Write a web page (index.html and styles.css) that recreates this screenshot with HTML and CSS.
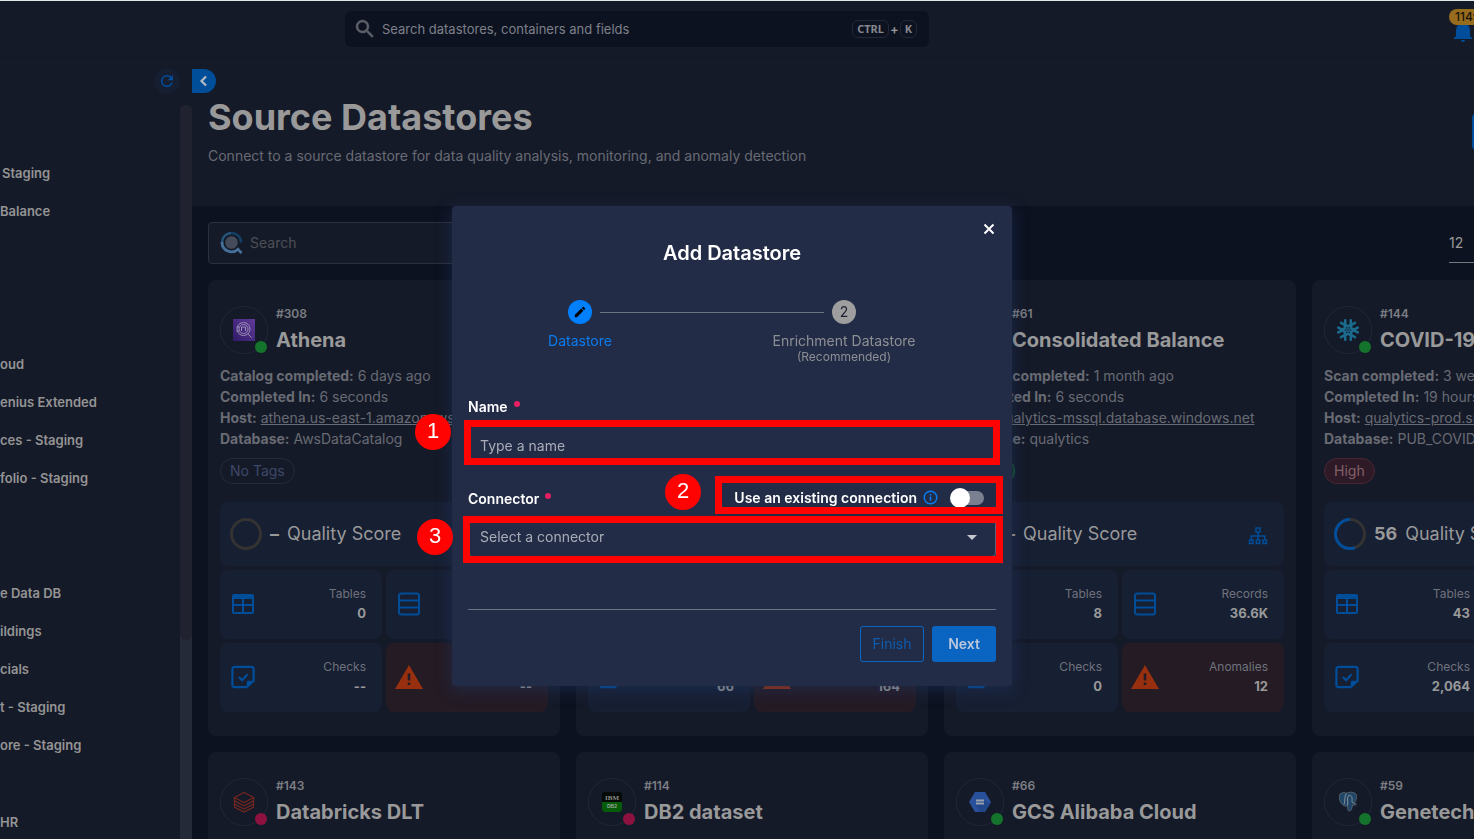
FILE: index.html
```html
<!DOCTYPE html>
<html lang="en">
<head>
<meta charset="utf-8">
<title>Source Datastores</title>
<link rel="stylesheet" href="styles.css">
</head>
<body>
<svg class="defs" aria-hidden="true">
  <symbol id="i-search" viewBox="0 0 24 24"><path fill="currentColor" stroke="currentColor" stroke-width=".5" d="M15.5 14h-.79l-.28-.27A6.47 6.47 0 0 0 16 9.5 6.5 6.5 0 1 0 9.5 16c1.61 0 3.09-.59 4.23-1.57l.27.28v.79l5 4.99L20.49 19l-4.99-5zm-6 0a4.5 4.5 0 1 1 0-9 4.5 4.5 0 0 1 0 9z"/></symbol>
  <symbol id="i-table" viewBox="0 0 24 24"><path fill="currentColor" fill-rule="evenodd" d="M3 2h18a2 2 0 0 1 2 2v16a2 2 0 0 1-2 2H3a2 2 0 0 1-2-2V4a2 2 0 0 1 2-2zm0 5v5h8V7zm10 0v5h8V7zM3 14v6h8v-6zm10 0v6h8v-6z"/></symbol>
  <symbol id="i-records" viewBox="0 0 24 24"><g fill="none" stroke="currentColor" stroke-width="2"><rect x="2" y="1.500" width="20" height="21" rx="2.500"/><path d="M2 8.500h20M2 15.500h20"/></g></symbol>
  <symbol id="i-check" viewBox="0 0 26 26"><path fill="none" stroke="currentColor" stroke-width="2.400" d="M17 24H4a2.500 2.500 0 0 1-2.500-2.500v-17A2.500 2.500 0 0 1 4 2h18a2.500 2.500 0 0 1 2.500 2.500V17z"/><path fill="currentColor" d="M17 24v-5a2 2 0 0 1 2-2h6z"/><path fill="none" stroke="currentColor" stroke-width="2.400" d="M8.500 13l3.500 3.500 6-6.500"/></symbol>
  <symbol id="i-warn" viewBox="0 0 28 24"><path fill="currentColor" fill-rule="evenodd" d="M14 0l14 24H0zM12.700 8.500v7h2.600v-7zm0 9v2.500h2.600v-2.500z"/></symbol>
  <symbol id="i-tree" viewBox="0 0 20 18"><g fill="none" stroke="currentColor" stroke-width="1.500"><rect x="8" y="1" width="4" height="4"/><rect x="1.500" y="13" width="3.500" height="3.500"/><rect x="8.300" y="13" width="3.500" height="3.500"/><rect x="15" y="13" width="3.500" height="3.500"/><path d="M10 5v8M3.300 13V9h13.400v4"/></g></symbol>
</svg>

<header class="topbar">
  <label class="global-search">
    <svg class="icon-24"><use href="#i-search"/></svg>
    <input type="text" placeholder="Search datastores, containers and fields" aria-label="Global search">
    <kbd>CTRL</kbd><span class="plus">+</span><kbd>K</kbd>
  </label>
  <button class="bell" aria-label="Notifications">
    <svg viewBox="0 0 24 24"><path fill="currentColor" d="M21 19v1H3v-1l2-2v-6a7 7 0 0 1 14 0v6zm-7 2a2 2 0 0 1-4 0z"/></svg>
    <span class="bell-count">1149</span>
  </button>
</header>

<div class="shell">
  <nav class="sidebar" aria-label="Datastores">
    <div class="sidebar-body">
      <button class="refresh" aria-label="Refresh"><svg viewBox="0 0 24 24"><path fill="currentColor" d="M17.650 6.350A8 8 0 1 0 19.730 14h-2.080A6 6 0 1 1 12 6c1.660 0 3.140.69 4.220 1.780L13 11h7V4z"/></svg></button>
      <ul class="tree tree-first"><li><a href="#">Staging</a></li><li><a href="#">Balance</a></li></ul>
      <ul class="tree tree-cloud"><li><a href="#">oud</a></li><li><a href="#">enius Extended</a></li><li><a href="#">ces - Staging</a></li><li><a href="#">folio - Staging</a></li></ul>
      <ul class="tree tree-data"><li><a href="#">e Data DB</a></li><li><a href="#">ildings</a></li><li><a href="#">cials</a></li><li><a href="#">t - Staging</a></li><li><a href="#">ore - Staging</a></li></ul>
      <ul class="tree tree-last"><li><a href="#">HR</a></li></ul>
    </div>
    <div class="scroll-track"><div class="scroll-thumb"></div></div>
  </nav>

  <main class="main">
    <button class="collapse" aria-label="Collapse sidebar"><svg viewBox="0 0 10 14"><path d="M7 2.500L2.500 7 7 11.500" fill="none" stroke="currentColor" stroke-width="2.200"/></svg></button>
    <section class="hero">
      <div>
        <h1>Source Datastores</h1>
        <p>Connect to a source datastore for data quality analysis, monitoring, and anomaly detection</p>
      </div>
      <button class="hero-add" aria-label="Add source datastore"></button>
    </section>

    <section class="content">
      <div class="toolbar">
        <label class="filter">
          <svg viewBox="0 0 24 24"><circle cx="11.500" cy="11.500" r="6.300" fill="#454b5a"/><path d="M21 11.500A9.500 9.500 0 0 0 8.500 2.500" fill="none" stroke="#123f63" stroke-width="2.600"/><path d="M11 2A9.500 9.500 0 0 0 2 11.500" fill="none" stroke="#235475" stroke-width="2.600"/><path d="M2 11a9.500 9.500 0 0 0 16 7.200l3.500 4" fill="none" stroke="#467099" stroke-width="2.800"/></svg>
          <input type="text" placeholder="Search" aria-label="Search datastores">
        </label>
        <select class="page-size" aria-label="Items per page"><option>12</option></select>
      </div>

      <div class="cards">
        <article class="card">
          <div class="card-head">
            <div class="avatar"><svg viewBox="0 0 22 22"><defs><linearGradient id="ath" x1="0" y1="1" x2="1" y2="0"><stop offset="0" stop-color="#2f1a66"/><stop offset="1" stop-color="#613a9b"/></linearGradient></defs><path fill="url(#ath)" d="M0 0h22v22H0z"/><g fill="none" stroke="#9a8fb4"><circle cx="10.500" cy="10" r="6.500"/><circle cx="10.500" cy="10" r="4.500"/><path d="M3.500 8h3M3.500 12h3M8.500 12V8h4v4M15 15l3.500 3.500"/></g></svg><i class="status ok"></i></div>
            <div><div class="card-id">#308</div><h2>Athena</h2></div>
          </div>
          <div class="details">
            <div><b>Catalog completed:</b> 6 days ago</div>
            <div><b>Completed In:</b> 6 seconds</div>
            <div><b>Host:</b> <a href="#">athena.us-east-1.amazonaws.com</a></div>
            <div><b>Database:</b> AwsDataCatalog</div>
          </div>
          <span class="chip">No Tags</span>
          <div class="tiles">
            <div class="score"><svg class="ring" viewBox="0 0 32 32"><circle cx="16" cy="16" r="14.500"/></svg><b>–</b><span>Quality Score</span></div>
            <div class="tile"><svg><use href="#i-table"/></svg><div><span>Tables</span><b>0</b></div></div>
            <div class="tile"><svg><use href="#i-records"/></svg><div><span>Records</span><b>--</b></div></div>
            <div class="tile"><svg><use href="#i-check"/></svg><div><span>Checks</span><b>--</b></div></div>
            <div class="tile alert"><svg><use href="#i-warn"/></svg><div><span>Anomalies</span><b>--</b></div></div>
          </div>
        </article>

        <article class="card">
          <div class="tiles tiles-end">
            <div class="tile"><svg><use href="#i-check"/></svg><div><span>Checks</span><b>66</b></div></div>
            <div class="tile alert"><svg><use href="#i-warn"/></svg><div><span>Anomalies</span><b>164</b></div></div>
          </div>
        </article>

        <article class="card">
          <div class="card-head">
            <div class="avatar"></div>
            <div><div class="card-id">#61</div><h2>Consolidated Balance</h2></div>
          </div>
          <div class="details">
            <div><b>Catalog completed:</b> 1 month ago</div>
            <div><b>Completed In:</b> 6 seconds</div>
            <div><b>Host:</b> <a href="#">qualytics-mssql.database.windows.net</a></div>
            <div><b>Database:</b> qualytics</div>
          </div>
          <span class="chip low">Low</span>
          <div class="tiles">
            <div class="score"><svg class="ring" viewBox="0 0 32 32"><circle cx="16" cy="16" r="14.500"/></svg><b>–</b><span>Quality Score</span><svg class="lineage"><use href="#i-tree"/></svg></div>
            <div class="tile"><svg><use href="#i-table"/></svg><div><span>Tables</span><b>8</b></div></div>
            <div class="tile"><svg><use href="#i-records"/></svg><div><span>Records</span><b>36.6K</b></div></div>
            <div class="tile"><svg><use href="#i-check"/></svg><div><span>Checks</span><b>0</b></div></div>
            <div class="tile alert"><svg><use href="#i-warn"/></svg><div><span>Anomalies</span><b>12</b></div></div>
          </div>
        </article>

        <article class="card">
          <div class="card-head">
            <div class="avatar"><svg viewBox="-12 -12 24 24"><g fill="none" stroke="#1a6b8d" stroke-width="2.800" stroke-linecap="round" stroke-linejoin="round"><circle r="1.500" stroke-width="1.300"/><g id="flake"><path d="M-3-10.500v4.700L0-3.800l3-2v-4.700" /></g><use href="#flake" transform="rotate(60)"/><use href="#flake" transform="rotate(120)"/><use href="#flake" transform="rotate(180)"/><use href="#flake" transform="rotate(240)"/><use href="#flake" transform="rotate(300)"/></g></svg><i class="status ok"></i></div>
            <div><div class="card-id">#144</div><h2>COVID-19</h2></div>
          </div>
          <div class="details">
            <div><b>Scan completed:</b> 3 weeks ago</div>
            <div><b>Completed In:</b> 19 hours</div>
            <div><b>Host:</b> <a href="#">qualytics-prod.snowflake</a></div>
            <div><b>Database:</b> PUB_COVID</div>
          </div>
          <span class="chip high">High</span>
          <div class="tiles">
            <div class="score"><svg class="ring" viewBox="0 0 32 32"><circle cx="16" cy="16" r="14.500"/><path d="M16 1.500A14.500 14.500 0 1 0 21 29.600"/></svg><b>56</b><span>Quality Score</span></div>
            <div class="tile"><svg><use href="#i-table"/></svg><div><span>Tables</span><b>43</b></div></div>
            <div class="tile"></div>
            <div class="tile"><svg><use href="#i-check"/></svg><div><span>Checks</span><b>2,064</b></div></div>
            <div class="tile alert"></div>
          </div>
        </article>

        <article class="card">
          <div class="card-head">
            <div class="avatar"><svg viewBox="0 0 22 22" fill="none" stroke="#70261f" stroke-width="1.300"><path d="M1.500 6.500L11 1.500l9.500 5L11 11.500zM1.500 6.500v3.300l9.500 5 9.500-5V7M1.500 10v3l9.500 5 9.500-5v-3M1.500 13.500v2.500l9.500 5 9.500-5v-2.500"/></svg><i class="status bad"></i></div>
            <div><div class="card-id">#143</div><h2>Databricks DLT</h2></div>
          </div>
        </article>
        <article class="card">
          <div class="card-head">
            <div class="avatar"><svg viewBox="0 0 22 22"><rect x="1" y="1" width="20" height="20" rx="3" fill="#060a06"/><path fill="#065c0b" d="M1 11h20v7a3 3 0 0 1-3 3H4a3 3 0 0 1-3-3z"/><text class="logo-ibm" x="11" y="9" text-anchor="middle">IBM</text><text class="logo-db" x="11" y="17" text-anchor="middle">DB2</text></svg><i class="status bad"></i></div>
            <div><div class="card-id">#114</div><h2>DB2 dataset</h2></div>
          </div>
        </article>
        <article class="card">
          <div class="card-head">
            <div class="avatar"><svg viewBox="0 0 22 22"><path fill="#28509b" d="M6 1h10l6 10-6 10H6L0 11z"/><path fill="#22468a" d="M15 9l6 4-5 8h-5l-4-7z"/><path fill="#98a0ad" d="M7 8.500h8v2H7zM7 11.500h8v2H7z"/></svg><i class="status ok"></i></div>
            <div><div class="card-id">#66</div><h2>GCS Alibaba Cloud</h2></div>
          </div>
        </article>
        <article class="card">
          <div class="card-head">
            <div class="avatar"><svg viewBox="0 0 22 22"><path d="M3 3c3-2 5-1.500 6.500-.8C12 1 16 .5 18.500 2.500c2 2 1 6-1 9.500.8 1 2 .5 2 1.200-1 1-2.500 1.300-4 .8-.5 2-.5 5-2.500 6-2 .3-2.500-1.500-2.700-5.500C9 15.500 7 15.500 6.500 14 4 14 1 7 3 3z" fill="#1f4668" stroke="#5f676f" stroke-width=".8"/><path d="M9.500 2.500C7 5 8.500 9 7 13.500M10.500 14.500c1-3-1-8 1-10 3-1 4 2 3.500 5 0 2 1 3 2.500 3" fill="none" stroke="#8b9096"/></svg><i class="status ok"></i></div>
            <div><div class="card-id">#59</div><h2>Genetech</h2></div>
          </div>
        </article>
      </div>
    </section>
  </main>
</div>

<div class="overlay">
  <form class="dialog" role="dialog" aria-labelledby="dlg-title">
    <button type="button" class="close" aria-label="Close"><svg viewBox="0 0 12 12"><path d="M1.500 1.500l9 9M10.500 1.500l-9 9" stroke="currentColor" stroke-width="2"/></svg></button>
    <h2 id="dlg-title">Add Datastore</h2>
    <ol class="steps">
      <li class="step current"><span class="dot"><svg viewBox="0 0 24 24"><path fill="currentColor" d="M3 17.250V21h3.750L17.810 9.940l-3.750-3.750zM20.710 7.040a1 1 0 0 0 0-1.410l-2.340-2.340a1 1 0 0 0-1.410 0l-1.830 1.830 3.750 3.750z"/></svg></span><span>Datastore</span></li>
      <li class="step"><span class="dot">2</span><span>Enrichment Datastore</span><small>(Recommended)</small></li>
    </ol>
    <label class="field-label" for="name">Name<i></i></label>
    <input class="field" id="name" type="text" placeholder="Type a name">
    <div class="connector-row">
      <label class="field-label" for="connector">Connector<i></i></label>
      <div class="existing">
        <label for="existing">Use an existing connection</label>
        <svg viewBox="0 0 16 16"><circle cx="8" cy="8" r="6.700" fill="none" stroke="currentColor" stroke-width="1.500"/><path fill="currentColor" d="M7.200 7h1.600v4.500H7.200zM7.200 4.200h1.600v1.600H7.200z"/></svg>
        <input id="existing" type="checkbox" class="switch">
      </div>
    </div>
    <div class="select-wrap">
      <select class="field" id="connector"><option>Select a connector</option></select>
      <svg viewBox="0 0 10 5"><path fill="currentColor" d="M0 0h10L5 5z"/></svg>
    </div>
    <div class="actions">
      <button type="button" class="btn outline">Finish</button>
      <button type="button" class="btn solid">Next</button>
    </div>
    <div class="mark mark-name"></div>
    <div class="mark mark-existing"></div>
    <div class="mark mark-connector"></div>
    <span class="num num-1">1</span>
    <span class="num num-2">2</span>
    <span class="num num-3">3</span>
  </form>
</div>
</body>
</html>
```
FILE: styles.css
```css
* { box-sizing: border-box; }
body {
  margin: 0;
  height: 100vh;
  overflow: hidden;
  display: flex;
  flex-direction: column;
  background: #0d1221;
  color: #999;
  font: 14px/20px Inter, "Liberation Sans", sans-serif;
}
h1, h2, p, ul, ol { margin: 0; padding: 0; }
ul, ol { list-style: none; }
button, input, select { font: inherit; color: inherit; border: 0; background: none; padding: 0; }
input, select { outline: 0; appearance: none; min-width: 0; }
a { color: inherit; }
svg { flex: none; }
.defs { position: absolute; width: 0; height: 0; }

/* Top bar */
.topbar {
  display: flex;
  align-items: center;
  height: 58px;
  flex: none;
  padding-left: 345px;
  background: #151a29;
  border-top: 1px solid #dfe9e3;
  border-bottom: 1px solid #121725;
}
.global-search {
  display: flex;
  align-items: center;
  width: 584px;
  height: 36px;
  padding: 0 12px 0 8px;
  border-radius: 6px;
  background: #0d1221;
  font-size: 13px;
}
.icon-24 { width: 24px; height: 24px; color: #5d6068; }
.global-search input { flex: 1; margin-left: 5px; }
.global-search input::placeholder { color: #7d8088; opacity: 1; }
kbd {
  height: 18px;
  padding: 0 4px;
  border: 1px solid #232836;
  border-radius: 6px;
  font: bold 11px/16px "Noto Sans", sans-serif;
  color: #85878d;
}
.plus { font-weight: 600; padding: 0 1px; }
.bell { position: relative; width: 25px; height: 40px; margin-left: auto; color: #004d99; flex: none; }
.bell svg { width: 24px; height: 24px; margin: 4px 2px 0; display: block; }
.bell-count {
  position: absolute;
  top: 0;
  left: 0;
  height: 16px;
  padding: 0 6px;
  border-radius: 8px;
  background: #986c1d;
  color: #15120a;
  font-size: 12px;
  font-weight: 500;
  line-height: 16px;
}

/* Sidebar */
.shell { display: flex; flex: 1; min-height: 0; }
.sidebar { display: flex; width: 192px; flex: none; background: #151a29; overflow: hidden; }
.sidebar-body { flex: 1; }
.refresh {
  display: block;
  width: 26px;
  height: 26px;
  margin: 10px 0 0 154px;
  padding: 4px;
  border-radius: 50%;
  background: #161e32;
  color: #004f9e;
}
.refresh svg { width: 18px; height: 18px; display: block; }
.tree a { display: block; font-size: 13px; font-weight: 600; line-height: 38px; text-decoration: none; white-space: nowrap; color: #949494; }
.tree-first { margin-top: 60px; }
.tree-first li:first-child { padding-left: 2px; }
.tree-cloud { margin-top: 115px; }
.tree-data { margin-top: 77px; }
.tree-last { margin-top: 39px; }
.scroll-track { width: 12px; margin-top: 47px; background: #252a38; border-radius: 6px 6px 0 0; }
.scroll-thumb { height: 535px; background: #20232f; border-radius: 6px; }

/* Main */
.main { position: relative; flex: 1; overflow: hidden; }
.collapse {
  position: absolute;
  top: 11px;
  left: 0;
  width: 24px;
  height: 24px;
  border-radius: 0 12px 12px 0;
  background: #004d99;
  color: #b5bac0;
}
.collapse svg { width: 10px; height: 14px; display: block; margin: auto; }
.hero {
  display: flex;
  justify-content: space-between;
  width: 1488px;
  height: 148px;
  padding: 35px 16px 0;
  background: #151a29;
}
.hero h1 { font-size: 36px; line-height: 48px; font-weight: 700; color: #999; }
.hero p { margin-top: 5px; color: #686b73; }
.hero-add { width: 192px; height: 36px; margin-top: 21px; border-radius: 4px; background: #004d99; }
.content { width: 1488px; padding: 16px; }
.toolbar { display: flex; justify-content: space-between; margin-bottom: 16px; }
.filter {
  display: flex;
  align-items: center;
  width: 352px;
  height: 42px;
  padding: 0 11px;
  gap: 6px;
  border: 1px solid #2c303c;
  border-radius: 4px;
  background: #151a29;
}
.filter svg { width: 24px; height: 24px; }
.filter input { flex: 1; }
.filter input::placeholder { color: #4d4f55; opacity: 1; }
.page-size { width: 215px; height: 41px; padding-top: 2px; border-bottom: 1px solid #75787f; color: #999; }
.cards { display: grid; grid-template-columns: repeat(4, 352px); gap: 16px; }
.card { display: flex; flex-direction: column; align-items: flex-start; min-height: 110px; padding: 26px 12px 24px; border-radius: 8px; background: #151a29; }
.card-head { display: flex; gap: 8px; }
.avatar {
  position: relative;
  display: flex;
  align-items: center;
  justify-content: center;
  width: 48px;
  height: 48px;
  border: 1px solid #222735;
  border-radius: 50%;
}
.avatar svg { width: 22px; height: 22px; }
.status { position: absolute; right: 0; bottom: 0; width: 12px; height: 12px; border-radius: 50%; }
.ok { background: #15742b; }
.bad { background: #8e123f; }
.card-id { font-size: 12px; font-weight: 600; line-height: 16px; color: #7c7e83; }
.card h2 { margin-top: 4px; font-size: 20px; line-height: 28px; font-weight: 700; white-space: nowrap; }
.details { margin-top: 11px; line-height: 21px; color: #686b73; white-space: nowrap; max-width: 100%; overflow: hidden; }
.chip { height: 26px; margin-top: 9px; padding: 0 9px; border: 1px solid #252b3d; border-radius: 13px; line-height: 24px; color: #3e4868; }
.high { background: #2e1a27; border-color: #4a2833; color: #836068; }
.low { width: 59px; border-color: #12603a; background: #123328; color: #3c8a60; }
.tiles { display: grid; grid-template-columns: 1fr 1fr; gap: 4px; width: 100%; margin-top: 18px; }
.tiles-end { margin-top: auto; }
.score { grid-column: 1 / 3; display: flex; align-items: center; height: 64px; padding: 0 16px 0 10px; border-radius: 8px; background: #171f33; font-size: 18px; }
.score b { margin: 0 8px; }
.ring { width: 32px; height: 32px; fill: none; stroke: #343332; stroke-width: 3; }
.ring path { stroke: #004d99; }
.lineage { width: 20px; height: 18px; margin-left: auto; margin-top: 4px; color: #004d99; }
.tile { display: flex; align-items: center; justify-content: space-between; height: 69px; padding: 0 16px 2px 10px; border-radius: 8px; background: #171f33; text-align: right; }
.tile svg { width: 26px; height: 24px; color: #004d99; }
.tile span { display: block; font-size: 12px; line-height: 18px; color: #6f727b; }
.tile b { display: block; font-size: 13px; line-height: 20px; }
.tile.alert { background: #241b25; }
.tile.alert svg { width: 28px; margin-left: -1px; color: #98300f; }
.logo-ibm { font: bold 7px "Liberation Serif", serif; fill: #8c8c8c; }
.logo-db { font: bold 5px "Liberation Sans", sans-serif; fill: #9aa59a; }

/* Dialog */
.overlay { position: fixed; inset: 0; display: flex; justify-content: center; align-items: flex-start; padding: 206px 10px 0 0; }
.dialog {
  position: relative;
  width: 560px;
  padding: 32px 16px 24px;
  border-radius: 4px;
  background: #232c47;
  color: #fff;
  box-shadow: 0 4px 16px rgba(32, 56, 100, 0.5);
}
.close { position: absolute; top: 17px; right: 17px; width: 12px; height: 12px; }
.close svg { display: block; width: 12px; height: 12px; }
.dialog h2 { font-size: 20px; line-height: 30px; font-weight: 600; text-align: center; }
.steps { display: flex; margin-top: 32px; margin-left: -20px; }
.step { position: relative; display: flex; flex: none; flex-direction: column; align-items: center; width: 264px; height: 70px; color: #8d8f94; }
.step small { font-size: 12px; line-height: 12px; }
.dot { width: 24px; height: 24px; margin-bottom: 7px; border-radius: 50%; background: #9e9e9e; color: #1d2233; line-height: 24px; text-align: center; }
.current { color: #0a7cf0; }
.current .dot { background: #0080ff; color: #000; }
.dot svg { display: block; width: 14px; height: 14px; margin: 5px; }
.current::after { content: ""; position: absolute; top: 12px; left: 152px; width: 224px; border-top: 1px solid #6d7282; }
.field-label { display: block; margin-top: 27px; font-weight: 600; }
.field-label i { display: inline-block; width: 6px; height: 6px; margin-left: 6px; border-radius: 50%; background: #e91e63; vertical-align: 5px; }
.field { display: block; width: 100%; height: 40px; padding: 0 11px; border: 1px solid #5a6175; border-radius: 4px; color: #a9adb8; background: #232c47; }
.field::placeholder { color: #a9adb8; opacity: 1; }
#name { margin-top: 8px; }
.connector-row { display: flex; justify-content: space-between; margin-top: 24px; }
.connector-row .field-label { margin: 0; }
.existing { display: flex; align-items: center; gap: 6px; padding: 0 12px 3px 0; font-weight: 600; height: 20px; }
.existing svg { width: 15px; height: 15px; color: #0a7cf0; }
.switch { position: relative; width: 32px; height: 14px; margin: 0 0 0 8px; border-radius: 7px; background: #7b8090; }
.switch::before { content: ""; position: absolute; top: -3px; left: -2px; width: 20px; height: 20px; border-radius: 50%; background: #fff; }
.select-wrap { position: relative; margin-top: 8px; }
.select-wrap svg { position: absolute; top: 18px; right: 19px; width: 10px; height: 5px; color: #c5c8d0; }
.actions { display: flex; justify-content: flex-end; gap: 8px; margin-top: 52px; padding-top: 16px; border-top: 1px solid #6d7282; }
.btn { width: 64px; height: 36px; border-radius: 3px; }
.outline { border: 1px solid #0a66c4; color: #0d5cb0; }
.solid { background: #0a64c2; color: #b9c6dc; font-weight: 600; }

/* Callouts over the dialog */
.mark { position: absolute; border: 7px solid #ff0303; pointer-events: none; }
.mark-name { left: 12px; top: 214px; width: 536px; height: 45px; }
.mark-existing { left: 263px; top: 270px; width: 288px; height: 38px; }
.mark-connector { left: 11px; top: 310px; width: 540px; height: 47px; }
.num { position: absolute; width: 36px; height: 36px; border-radius: 50%; background: #ff0303; font: 22px/34px "Liberation Sans", Arial, sans-serif; text-align: center; }
.num-1 { left: -37px; top: 208px; }
.num-2 { left: 213px; top: 268px; }
.num-3 { left: -35px; top: 313px; }
```
